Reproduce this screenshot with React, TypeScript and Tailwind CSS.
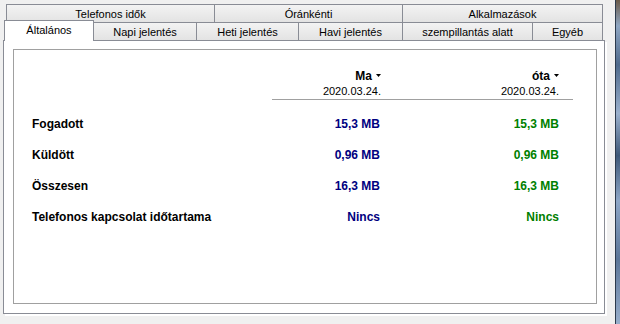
import React from 'react';

const topTabs = [
  { label: 'Telefonos idők', w: 'w-[209px]' },
  { label: 'Óránkénti', w: 'w-[189px]' },
  { label: 'Alkalmazások', w: 'w-[201px]' },
];

const bottomTabs = [
  { label: 'Napi jelentés', w: 'w-[104px]' },
  { label: 'Heti jelentés', w: 'w-[103px]' },
  { label: 'Havi jelentés', w: 'w-[105px]' },
  { label: 'szempillantás alatt', w: 'w-[131px]' },
  { label: 'Egyéb', w: 'w-[71px]' },
];

const rows = [
  { label: 'Fogadott', today: '15,3 MB', since: '15,3 MB' },
  { label: 'Küldött', today: '0,96 MB', since: '0,96 MB' },
  { label: 'Összesen', today: '16,3 MB', since: '16,3 MB' },
  { label: 'Telefonos kapcsolat időtartama', today: 'Nincs', since: 'Nincs' },
];

function Caret() {
  return (
    <svg width="5" height="3" viewBox="0 0 5 3" className="ml-[4px] mb-[3px]">
      <path d="M0 0h5L2.5 3z" fill="#000" />
    </svg>
  );
}

export default function App() {
  return (
    <div className="w-[620px] h-[324px] bg-[#f0f0f0] flex overflow-hidden font-['Liberation_Sans',Arial,sans-serif] text-[11px] text-black">
      <div className="w-[615px] h-full pt-[4px] pl-[3px]">
        {/* top tab row */}
        <div className="flex ml-[3px] h-[18px]">
          {topTabs.map((t, i) => (
            <div
              key={t.label}
              className={`${t.w} h-[18px] ${i > 0 ? '-ml-px' : ''} border border-b-0 border-[#898c95] bg-gradient-to-b from-[#f3f3f3] to-[#e3e3e3] flex items-center justify-center leading-none pt-[1px]`}
            >
              {t.label}
            </div>
          ))}
        </div>

        {/* second tab row */}
        <div className="flex items-end h-[18px] ml-[1px]">
          <div className="w-[90px] h-[21px] -mb-px relative z-10 border border-b-0 border-[#898c95] bg-white flex items-center justify-center leading-none pb-[1px]">
            Általános
          </div>
          {bottomTabs.map((t) => (
            <div
              key={t.label}
              className={`${t.w} h-[18px] -ml-px border border-b-0 border-[#898c95] bg-gradient-to-b from-[#f3f3f3] to-[#e3e3e3] flex items-center justify-center leading-none pt-[1px]`}
            >
              {t.label}
            </div>
          ))}
        </div>

        {/* panel */}
        <div className="w-[602px] h-[274px] border border-[#898c95] bg-white shadow-[2px_2px_0_0_#ffffff]">
          <div className="mt-[8px] ml-[9px] w-[584px] h-[255px] border border-[#a0a0a0]">
            <div className="pt-[19px] grid grid-cols-[258px_109px_178px] leading-[15px]">
              <div />
              <div className="flex flex-col items-end">
                <div className="flex items-center font-bold text-[12px]">
                  Ma
                  <Caret />
                </div>
                <div>2020.03.24.</div>
              </div>
              <div className="flex flex-col items-end">
                <div className="flex items-center font-bold text-[12px]">
                  óta
                  <Caret />
                </div>
                <div>2020.03.24.</div>
              </div>
            </div>
            <div className="ml-[258px] w-[301px] h-px bg-[#a0a0a0]" />

            <div className="mt-[8px]">
              {rows.map((r) => (
                <div key={r.label} className="grid grid-cols-[258px_109px_178px] h-[31px] items-center font-bold text-[12px]">
                  <div className="pl-[18px]">{r.label}</div>
                  <div className="text-right text-[#000080] pr-[1px]">{r.today}</div>
                  <div className="text-right text-[#008000]">{r.since}</div>
                </div>
              ))}
            </div>
          </div>
        </div>
      </div>
      <div className="w-px h-full bg-[#2c3a4c]" />
      <div className="w-[4px] h-full bg-[linear-gradient(to_bottom,#6b5a48_0%,#8fa6c2_8%,#4f6a8c_20%,#9ab0cc_35%,#3e5878_48%,#8da6c6_62%,#5c7698_80%,#98aecb_100%)]" />
    </div>
  );
}
